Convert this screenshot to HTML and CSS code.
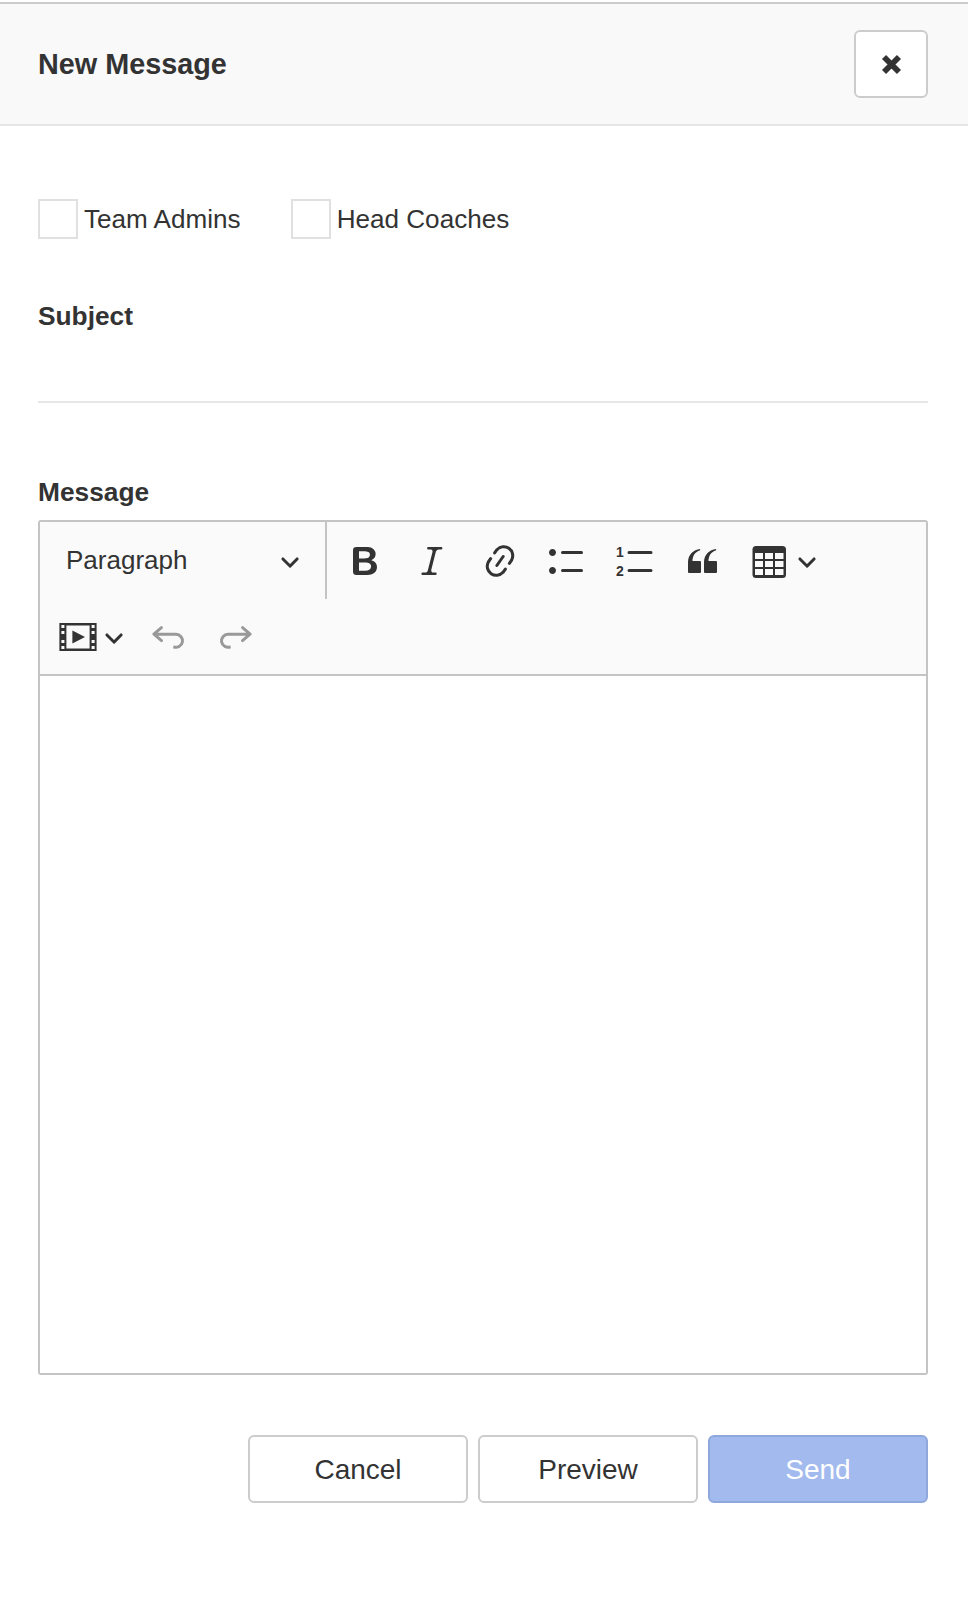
FILE: index.html
```html
<!DOCTYPE html>
<html lang="en">
<head>
    <meta charset="UTF-8">
    <meta name="viewport" content="width=device-width, initial-scale=1.0">
    <title>New Message</title>
    <link rel="stylesheet" href="styles.css">
</head>
<body>
    <div class="modal">
        <div class="modal-header">
            <h1>New Message</h1>
            <button class="close-btn" aria-label="Close">
                <svg width="23" height="23" viewBox="0 0 20 20"><path d="M3.500 3.500l13 13M16.500 3.500l-13 13" fill="none" stroke="#333" stroke-width="5"/></svg>
            </button>
        </div>

        <div class="modal-body">
            <div class="recipients">
                <label class="check"><span class="check-box"></span>Team Admins</label>
                <label class="check"><span class="check-box"></span>Head Coaches</label>
            </div>

            <div class="field-label subject-label">Subject</div>
            <div class="subject-input"></div>

            <div class="field-label message-label">Message</div>
            <div class="editor">
                <div class="toolbar">
                    <div class="toolbar-row">
                        <div class="format-select">
                            <span>Paragraph</span>
                            <svg class="chevron" viewBox="0 0 10 10"><path d="M.941 4.523a.75.75 0 1 1 1.06-1.06l3.006 3.005 3.005-3.005a.75.75 0 1 1 1.06 1.06l-3.549 3.55a.75.75 0 0 1-1.168-.136L.941 4.523z"/></svg>
                        </div>
                        <div class="tools">
                            <button class="tool">
                                <svg class="icon" viewBox="0 0 20 20"><path d="M10.187 17H5.773c-.637 0-1.092-.138-1.364-.415-.273-.277-.409-.718-.409-1.323V4.738c0-.617.14-1.062.419-1.332.279-.27.73-.406 1.354-.406h4.680c.69 0 1.288.041 1.793.124.506.083.96.242 1.360.478.341.197.644.447.906.75a3.262 3.262 0 0 1 .808 2.162c0 1.401-.722 2.426-2.167 3.075C15.050 10.175 16 11.315 16 13.010a3.756 3.756 0 0 1-2.296 3.504 6.100 6.100 0 0 1-1.517.377c-.571.073-1.238.11-2 .11zm-.217-6.217H7v4.087h3.069c1.977 0 2.965-.69 2.965-2.072 0-.707-.256-1.220-.768-1.537-.512-.319-1.277-.478-2.296-.478zM7 5.130v3.619h2.606c.729 0 1.292-.067 1.690-.2a1.600 1.600 0 0 0 .91-.765c.165-.267.247-.566.247-.897 0-.707-.26-1.176-.778-1.409-.519-.232-1.310-.348-2.375-.348H7z"/></svg>
                            </button>
                            <button class="tool">
                                <svg class="icon" viewBox="0 0 20 20"><path d="m9.586 14.633.021.004c-.036.335.095.655.393.962.082.083.173.15.274.201h1.474a.6.6 0 1 1 0 1.200H5.304a.6.6 0 0 1 0-1.200h1.150c.474-.07.809-.182 1.005-.334.157-.122.291-.32.404-.597l2.416-9.550a1.053 1.053 0 0 0-.281-.823 1.120 1.120 0 0 0-.442-.296H8.150a.6.6 0 0 1 0-1.200h6.443a.6.6 0 1 1 0 1.200h-1.195c-.376.056-.65.155-.823.296-.215.175-.423.439-.623.79l-2.366 9.347z"/></svg>
                            </button>
                            <button class="tool">
                                <svg class="icon" viewBox="0 0 20 20"><path d="M11.077 15l.991-1.416a.75.75 0 1 1 1.229.86l-1.148 1.640a.748.748 0 0 1-.217.206 5.251 5.251 0 0 1-8.503-5.955.741.741 0 0 1 .12-.274l1.147-1.639a.75.75 0 1 1 1.228.86L4.933 10.700l.006.003a3.750 3.750 0 0 0 6.132 4.294l.006.004zm5.494-5.335a.748.748 0 0 1-.12.274l-1.147 1.639a.75.75 0 1 1-1.228-.86l.86-1.230a3.750 3.750 0 0 0-6.144-4.301l-.86 1.229a.75.75 0 0 1-1.229-.86l1.148-1.640a.748.748 0 0 1 .217-.206 5.251 5.251 0 0 1 8.503 5.955zm-4.563-2.532a.75.75 0 0 1 .184 1.045l-3.155 4.505a.75.75 0 1 1-1.229-.86l3.155-4.506a.75.75 0 0 1 1.045-.184z"/></svg>
                            </button>
                            <button class="tool">
                                <svg class="icon" viewBox="0 0 20 20"><path d="M7 5.750c0 .414.336.75.75.75h9.500a.75.75 0 1 0 0-1.500h-9.500a.75.75 0 0 0-.75.75zm-6 0C1 4.784 1.777 4 2.750 4c.966 0 1.750.777 1.750 1.750 0 .966-.777 1.750-1.750 1.750C1.784 7.500 1 6.723 1 5.750zm6 9c0 .414.336.75.75.75h9.500a.75.75 0 1 0 0-1.500h-9.500a.75.75 0 0 0-.75.75zm-6 0c0-.966.777-1.750 1.750-1.750.966 0 1.750.777 1.750 1.750 0 .966-.777 1.750-1.750 1.750-.966 0-1.750-.777-1.750-1.750z"/></svg>
                            </button>
                            <button class="tool">
                                <svg class="icon" viewBox="0 0 40 40"><text x="1" y="16" class="num">1</text><text x="1" y="35" class="num">2</text><path d="M14 11.500h22M14 29.500h22" fill="none" stroke="#333" stroke-width="3" stroke-linecap="round"/></svg>
                            </button>
                            <button class="tool">
                                <svg class="icon" viewBox="0 0 20 20"><path d="M3 10.423a6.500 6.500 0 0 1 6.056-6.408l.038.67C6.448 5.423 5.354 7.663 5.220 10H9c.552 0 .5.432.5.986v4.511c0 .554-.448.503-1 .503h-5c-.552 0-.5-.449-.5-1.003v-4.574zm8 0a6.500 6.500 0 0 1 6.056-6.408l.038.67c-2.646.739-3.740 2.979-3.873 5.315H17c.552 0 .5.432.5.986v4.511c0 .554-.448.503-1 .503h-5c-.552 0-.5-.449-.5-1.003v-4.574z"/></svg>
                            </button>
                            <button class="tool">
                                <svg class="icon" viewBox="0 0 40 40"><rect x="3.500" y="5" width="33.500" height="32" rx="3.500"/><path class="cell" d="M6 12h8v6H6zM16 12h8v6h-8zM26 12h8.500v6H26zM6 20h8v6H6zM16 20h8v6h-8zM26 20h8.500v6H26zM6 28h8v6H6zM16 28h8v6h-8zM26 28h8.500v6H26z"/></svg>
                                <svg class="chevron" viewBox="0 0 10 10"><path d="M.941 4.523a.75.75 0 1 1 1.06-1.06l3.006 3.005 3.005-3.005a.75.75 0 1 1 1.06 1.06l-3.549 3.55a.75.75 0 0 1-1.168-.136L.941 4.523z"/></svg>
                            </button>
                        </div>
                    </div>
                    <div class="toolbar-row second-row">
                        <button class="tool tool-media">
                            <svg class="icon" viewBox="0 0 20 20"><path fill-rule="evenodd" d="M.7 3h18.600v14H.7zM1.700 4v1.500h1.500V4zM1.700 7v1.500h1.500V7zM1.700 11.500V13h1.500v-1.500zM1.700 14.500V16h1.500v-1.500zM16.800 4v1.500h1.500V4zM16.800 7v1.500h1.500V7zM16.800 11.500V13h1.500v-1.500zM16.800 14.500V16h1.500v-1.500zM4.200 4.300v11.400h11.600V4.300z"/><path d="M7.200 6.700L13.500 10l-6.300 3.300z"/></svg>
                            <svg class="chevron" viewBox="0 0 10 10"><path d="M.941 4.523a.75.75 0 1 1 1.06-1.06l3.006 3.005 3.005-3.005a.75.75 0 1 1 1.06 1.06l-3.549 3.55a.75.75 0 0 1-1.168-.136L.941 4.523z"/></svg>
                        </button>
                        <button class="tool tool-off">
                            <svg class="icon" viewBox="0 0 20 20"><path d="m5.042 9.367 2.189 1.837a.75.75 0 0 1-.965 1.149l-3.788-3.180a.747.747 0 0 1-.21-.284.75.75 0 0 1 .17-.945L6.230 4.762a.75.75 0 1 1 .964 1.150L4.863 7.866h8.917A.75.75 0 0 1 14 7.900a4 4 0 1 1-1.477 7.718l.344-1.489a2.500 2.500 0 1 0 1.094-4.730l.008-.032H5.042z"/></svg>
                        </button>
                        <button class="tool tool-off">
                            <svg class="icon" viewBox="0 0 20 20"><path d="m14.958 9.367-2.189 1.837a.75.75 0 0 0 .965 1.149l3.788-3.180a.747.747 0 0 0 .21-.284.75.75 0 0 0-.17-.945L13.770 4.762a.75.75 0 1 0-.964 1.150l2.331 1.955H6.220A.75.75 0 0 0 6 7.900a4 4 0 1 0 1.477 7.718l-.344-1.489A2.500 2.500 0 1 1 6.039 9.400l-.008-.032h8.927z"/></svg>
                        </button>
                    </div>
                </div>
                <div class="editor-area"></div>
            </div>

            <div class="actions">
                <button class="btn">Cancel</button>
                <button class="btn">Preview</button>
                <button class="btn btn-send">Send</button>
            </div>
        </div>
    </div>
</body>
</html>
```

FILE: styles.css
```css
/* Base */
* {
    margin: 0;
    padding: 0;
    box-sizing: border-box;
    font-family: "Liberation Sans", Arial, sans-serif;
}

body {
    background: white;
    color: #333;
    padding-top: 2px;
}

button {
    background: none;
    border: none;
    color: inherit;
}

/* Header */
.modal {
    border-top: 2px solid #ccc;
}

.modal-header {
    height: 122px;
    background: #f9f9f9;
    border-bottom: 2px solid #e6e6e6;
    padding: 0 40px 0 38px;
    display: flex;
    align-items: center;
    justify-content: space-between;
}

.modal-header h1 {
    font-size: 28.8px;
    font-weight: bold;
}

.close-btn {
    width: 74px;
    height: 68px;
    background: white;
    border: 2px solid #ccc;
    border-radius: 6px;
    display: flex;
    align-items: center;
    justify-content: center;
}

/* Body */
.modal-body {
    padding: 73px 40px 0 38px;
}

.recipients {
    display: flex;
    gap: 50px;
}

.check {
    display: flex;
    align-items: center;
    gap: 6px;
    font-size: 26.1px;
}

.check-box {
    width: 40px;
    height: 40px;
    background: white;
    border: 2px solid #e0e0e0;
}

.field-label {
    font-size: 26.3px;
    font-weight: bold;
    line-height: 30px;
}

.subject-label {
    margin-top: 62px;
}

.subject-input {
    height: 72px;
    border-bottom: 2px solid #e6e6e6;
}

.message-label {
    margin-top: 74px;
    margin-bottom: 13px;
}

/* Editor */
.editor {
    border: 2px solid #c4c4c4;
    border-radius: 3px;
}

.toolbar {
    height: 154px;
    background: #fafafa;
    border-bottom: 2px solid #c4c4c4;
}

.toolbar-row {
    display: flex;
    align-items: flex-start;
}

.format-select {
    width: 287px;
    height: 77px;
    border-right: 2px solid #c4c4c4;
    padding: 0 25px 0 26px;
    font-size: 26px;
    display: flex;
    align-items: center;
    justify-content: space-between;
}

.tools {
    display: flex;
    height: 77px;
    align-items: center;
    gap: 27.4px;
    margin-left: 18px;
}

.tool {
    display: flex;
    align-items: center;
    gap: 8px;
}

.icon {
    width: 40px;
    height: 40px;
    fill: #333;
}

.chevron {
    width: 20px;
    height: 20px;
    fill: #333;
}

.tool-off .icon {
    fill: #999;
}

.cell {
    fill: #fafafa;
}

.num {
    font-size: 14px;
    font-weight: bold;
    fill: #333;
}

.second-row {
    align-items: center;
    height: 75px;
    padding-left: 18px;
    gap: 27.4px;
}

.tool-media {
    gap: 6px;
    margin-right: -3px;
}

.editor-area {
    height: 697px;
    background: white;
}

/* Footer buttons */
.actions {
    display: flex;
    justify-content: flex-end;
    gap: 10px;
    margin-top: 60px;
}

.btn {
    width: 220px;
    height: 68px;
    padding-top: 1px;
    background: white;
    border: 2px solid #ccc;
    border-radius: 6px;
    font-size: 28px;
    color: #333;
}

.btn-send {
    background: #a3baee;
    border-color: #8ea8dd;
    color: white;
}
```
